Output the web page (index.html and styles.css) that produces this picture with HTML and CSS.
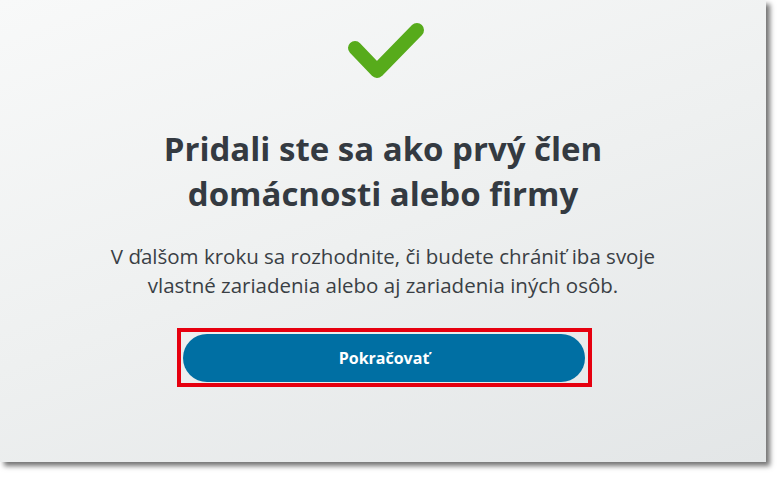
FILE: index.html
```html
<!DOCTYPE html>
<html lang="sk">
<head>
<meta charset="utf-8">
<link rel="stylesheet" href="styles.css">
</head>
<body>
<div class="card">
  <svg class="check" width="90" height="70" viewBox="0 0 90 70">
    <polyline points="17,33 39,56 79,15" fill="none" stroke="#57AB1B" stroke-width="14" stroke-linecap="round" stroke-linejoin="round"/>
  </svg>
  <h1 class="title">Pridali ste sa ako prvý člen<br>domácnosti alebo firmy</h1>
  <p class="text">V ďalšom kroku sa rozhodnite, či budete chrániť iba svoje<br>vlastné zariadenia alebo aj zariadenia iných osôb.</p>
  <div class="highlight">
    <button class="btn">Pokračovať</button>
  </div>
</div>
</body>
</html>
```
FILE: styles.css
```css
html, body {
  margin: 0;
  padding: 0;
  background: #ffffff;
}
body {
  width: 781px;
  height: 477px;
  overflow: hidden;
}
.card {
  width: 766px;
  height: 462px;
  box-sizing: border-box;
  background: linear-gradient(160deg, #f8f9f9 0%, #eef0f0 50%, #e3e6e7 100%);
  box-shadow: 4px 4px 5px rgba(0, 0, 0, 0.55);
  display: flex;
  flex-direction: column;
  align-items: center;
  padding-top: 15px;
}
.check {
  display: block;
}
.title {
  margin: 41px 0 0;
  font-family: "Open Sans", "Noto Sans", sans-serif;
  font-weight: 700;
  font-size: 33px;
  line-height: 45px;
  color: #343a41;
  text-align: center;
}
.text {
  margin: 26px 0 0;
  font-family: "Open Sans", "Noto Sans", sans-serif;
  font-weight: 400;
  font-size: 20.5px;
  line-height: 29px;
  color: #3a3f45;
  text-align: center;
}
.highlight {
  margin-top: 28px;
  border: 4px solid #e6000f;
  padding: 2px 3px 1px 2px;
  margin-left: 3px;
}
.btn {
  display: block;
  width: 402px;
  height: 48px;
  border: none;
  border-radius: 24px;
  background: #006fa3;
  color: #ffffff;
  font-family: "Open Sans", "Noto Sans", sans-serif;
  font-weight: 700;
  font-size: 16px;
  cursor: pointer;
}
```
